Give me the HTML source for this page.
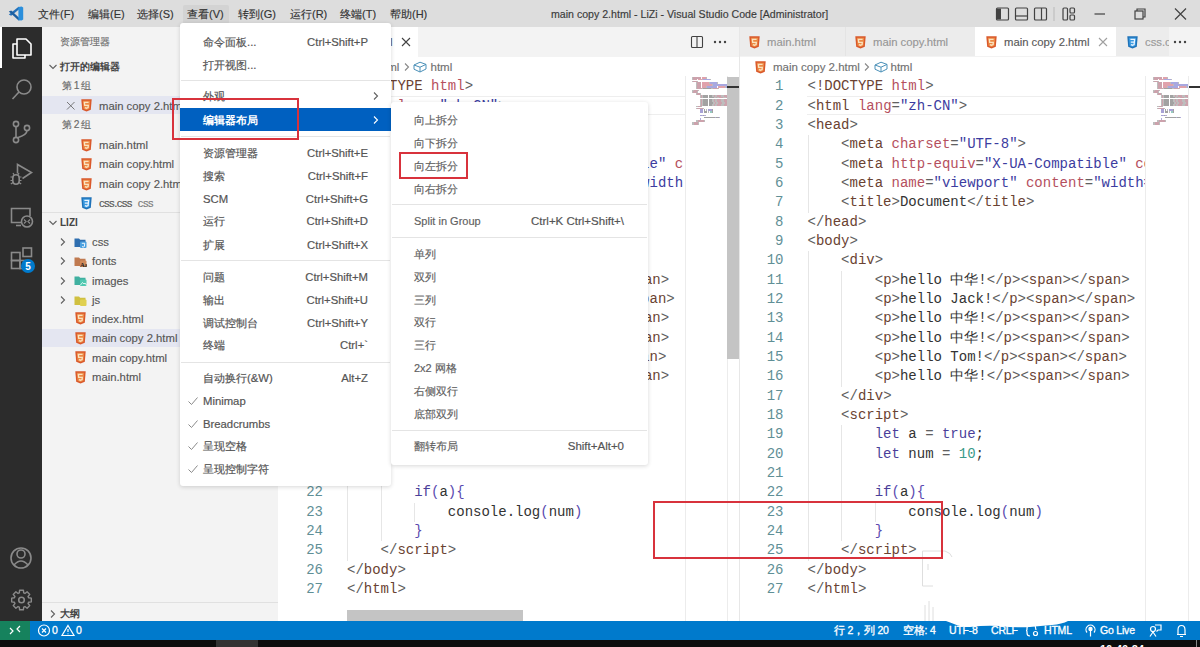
<!DOCTYPE html>
<html><head><meta charset="utf-8"><style>
*{margin:0;padding:0;box-sizing:border-box}
html,body{width:1200px;height:647px;overflow:hidden;background:#fff;font-family:"Liberation Sans",sans-serif}
.abs{position:absolute}
#titlebar{position:absolute;left:0;top:0;width:1200px;height:27px;background:#dddddd}
.mb{position:absolute;top:6px;font-size:11px;color:#333;-webkit-text-stroke:0.15px #333;line-height:16px;white-space:nowrap}
#act{position:absolute;left:0;top:27px;width:42px;height:594px;background:#2c2c2c}
#side{position:absolute;left:42px;top:27px;width:236px;height:594px;background:#f3f3f3}
.st{position:absolute;font-size:11.3px;color:#565656;-webkit-text-stroke:0.15px currentColor;line-height:16px;white-space:nowrap}
.ed{position:absolute;top:27px;height:594px;background:#fff;overflow:hidden}
.tabs{position:absolute;left:0;top:0;height:29px;background:#f3f3f3;width:100%}
.ln{position:absolute;width:40px;text-align:right;font-family:"Liberation Mono",monospace;font-size:14px;line-height:19.33px;color:#5f8f96}
.cl{position:absolute;font-family:"Liberation Mono",monospace;font-size:14px;line-height:19.33px;color:#333;white-space:pre}
.p{color:#606060}.t{color:#6a4232}.a{color:#b5505e}.s{color:#3c3ca0}.x{color:#333}.k{color:#4b3f9a}.n{color:#3a9a8a}.b{color:#5a4ab0}
.menu{position:absolute;background:#fff;box-shadow:0 1px 4px rgba(0,0,0,0.16);border-radius:3px}
.mi{position:absolute;font-size:11.3px;color:#555;-webkit-text-stroke:0.2px #555;line-height:16px;white-space:nowrap}
.sep{position:absolute;height:1px;background:#e4e4e4}
.red{position:absolute;border:2.5px solid #d8323c}
#status{position:absolute;left:0;top:621px;width:1200px;height:19px;background:#007acc}
#task{position:absolute;left:0;top:640px;width:1200px;height:7px;background:#0d0d0d}
.sb{position:absolute;top:623px;font-size:10.5px;color:#fff;line-height:15px;white-space:nowrap;overflow:visible;-webkit-text-stroke:0.3px #fff;letter-spacing:-0.2px}
</style></head>
<body>
<div id="titlebar"></div>
<svg class="abs" style="left:0;top:0" width="30" height="27" viewBox="0 0 30 27"><path d="M18.6 6.8 L21 7.8 L11.2 15.8 L8.8 14.6 Z" fill="#2470b8"/><path d="M8.8 11.6 L11.2 10.4 L21 19.4 L18.6 20.6 Z" fill="#1d5fa0"/><path d="M18.4 7 L21.6 6.6 L23.2 7.6 V19.6 L21.6 20.6 L18.4 20.2 Z" fill="#2b8fdc"/></svg>
<div class="abs" style="left:183px;top:5px;width:46px;height:19px;background:#d3d3d3;border-radius:2px"></div>
<div class="mb" style="left:38px">文件(F)</div>
<div class="mb" style="left:88px">编辑(E)</div>
<div class="mb" style="left:137px">选择(S)</div>
<div class="mb" style="left:187px">查看(V)</div>
<div class="mb" style="left:238px">转到(G)</div>
<div class="mb" style="left:290px">运行(R)</div>
<div class="mb" style="left:340px">终端(T)</div>
<div class="mb" style="left:390px">帮助(H)</div>
<div class="mb" style="left:551px;color:#3c3c3c;font-size:10.6px">main copy 2.html - LiZi - Visual Studio Code [Administrator]</div>
<svg class="abs" style="left:990px;top:0" width="210" height="27" viewBox="0 0 210 27">
<g fill="none" stroke="#424242" stroke-width="1.2">
<rect x="6.5" y="8" width="12" height="12" rx="1"/>
<rect x="25.5" y="8" width="12" height="12" rx="1"/><line x1="25.5" y1="16" x2="37.5" y2="16"/>
<rect x="44.5" y="8" width="12" height="12" rx="1"/><line x1="51.5" y1="8" x2="51.5" y2="20"/>
<line x1="64" y1="7" x2="64" y2="21" stroke="#c0c0c0"/>
<rect x="73" y="8" width="4.5" height="12" rx="1"/><rect x="80" y="8" width="4.5" height="5" rx="1"/><rect x="80" y="15" width="4.5" height="5" rx="1"/>
<line x1="104.5" y1="14" x2="115" y2="14"/>
<rect x="145" y="11" width="8" height="8"/><path d="M147 11 V9 H155 V17 H153"/>
<path d="M185 8.5 L196 19.5 M196 8.5 L185 19.5"/>
</g>
<rect x="7" y="8.6" width="4" height="10.8" fill="#424242"/>
</svg>
<div id="act"></div>
<div class="abs" style="left:0;top:27px;width:2px;height:41px;background:#fff"></div>
<svg class="abs" style="left:0;top:27px" width="42" height="594" viewBox="0 0 42 594">
<g fill="none" stroke="#fff" stroke-width="1.6" stroke-linejoin="round">
<path d="M17 12 H26 L31 17 V28 H17 Z"/><path d="M17 17 H13 V31 H25 V28"/>
</g>
<g fill="none" stroke="#8a8a8a" stroke-width="1.6">
<circle cx="24" cy="60" r="7"/><line x1="19" y1="65" x2="12.5" y2="72"/>
<circle cx="16" cy="97" r="2.6"/><circle cx="16" cy="113" r="2.6"/><circle cx="27" cy="101" r="2.6"/>
<path d="M16 99.6 V110.4 M27 103.6 Q27 108 17.5 110.8"/>
<path d="M17.5 146.5 V137.5 L31.5 145.5 L22.5 151.5"/>
<path d="M12.8 151 Q12.8 147.8 16 147.8 Q19.2 147.8 19.2 151 V154 Q19.2 157.2 16 157.2 Q12.8 157.2 12.8 154 Z"/><path d="M10.5 150 H12.8 M10.5 153.5 H12.8 M10.8 157 L13 155.5 M21.5 150 H19.2 M21.5 153.5 H19.2 M21.2 157 L19 155.5 M14 147.8 L13 146 M18 147.8 L19 146" stroke-width="1.2"/>
<path d="M21 195.5 H11.5 V181.5 H30 V189"/><path d="M16 198.5 H21"/>
<circle cx="27" cy="194.5" r="5.5" fill="#2c2c2c"/><path d="M24 192.5 L26 194.5 L24 196.5 M30 192.5 L28 194.5 L30 196.5" stroke-width="1.2"/>
<rect x="11.5" y="225.5" width="8.5" height="8"/><rect x="11.5" y="233.5" width="8.5" height="8"/><rect x="20" y="233.5" width="7" height="8"/><rect x="23" y="221" width="8.5" height="8.5"/>
<circle cx="21" cy="531" r="10"/><circle cx="21" cy="527" r="4"/><path d="M14 538 Q21 530 28 538"/>
<circle cx="21.5" cy="573" r="2.8"/>
<path d="M28.57 570.81 L31.32 571.11 L31.32 574.89 L28.57 575.19 L28.05 576.45 L29.78 578.61 L27.11 581.28 L24.95 579.55 L23.69 580.07 L23.39 582.82 L19.61 582.82 L19.31 580.07 L18.05 579.55 L15.89 581.28 L13.22 578.61 L14.95 576.45 L14.43 575.19 L11.68 574.89 L11.68 571.11 L14.43 570.81 L14.95 569.55 L13.22 567.39 L15.89 564.72 L18.05 566.45 L19.31 565.93 L19.61 563.18 L23.39 563.18 L23.69 565.93 L24.95 566.45 L27.11 564.72 L29.78 567.39 L28.05 569.55 Z" stroke-width="1.4" stroke-linejoin="round"/>
</g>
<circle cx="28" cy="239" r="7" fill="#007acc"/>
<text x="28" y="243" font-size="10" font-family="Liberation Sans" fill="#fff" text-anchor="middle" font-weight="bold">5</text>
</svg>
<div id="side"></div>
<div class="st" style="left:60px;top:34.0px;font-size:10px;color:#6f6f6f">资源管理器</div>
<svg class="abs" style="left:48px;top:62px" width="10" height="10" viewBox="0 0 10 10"><path d="M1.5 3 L5 6.5 L8.5 3" fill="none" stroke="#616161" stroke-width="1.1"/></svg>
<div class="st" style="left:60px;top:59.0px;font-size:10px;font-weight:bold;color:#444;-webkit-text-stroke:0">打开的编辑器</div>
<div class="st" style="left:62px;top:78.0px;font-size:10.3px;color:#6a6a6a;word-spacing:-1.2px">第 1 组</div>
<div class="abs" style="left:42px;top:96px;width:236px;height:18px;background:#e4e6f1"></div>
<svg class="abs" style="left:66px;top:101px" width="10" height="10" viewBox="0 0 10 10"><path d="M1 1 L8.5 8.5 M8.5 1 L1 8.5" stroke="#6a6a6a" stroke-width="0.9"/></svg>
<svg class="abs" style="left:81px;top:99px" width="11" height="13" viewBox="0 0 11 13"><path d="M0.3 0.3 H10.7 L9.8 10.8 L5.5 12.6 L1.2 10.8 Z" fill="#d9582b"/><path d="M1.8 1.8 H9.2 L8.5 9.8 L5.5 11 L2.5 9.8 Z" fill="#ec8a45"/><path d="M7.6 3.4 H3.4 L3.7 6.4 H7.3 L7.1 8.6 L5.5 9.2 L3.9 8.6" fill="none" stroke="#fbe3c0" stroke-width="1.3"/></svg>
<div class="st" style="left:99px;top:98.0px;">main copy 2.html</div>
<div class="st" style="left:62px;top:117.0px;font-size:10.3px;color:#6a6a6a;word-spacing:-1.2px">第 2 组</div>
<svg class="abs" style="left:81px;top:138.5px" width="11" height="13" viewBox="0 0 11 13"><path d="M0.3 0.3 H10.7 L9.8 10.8 L5.5 12.6 L1.2 10.8 Z" fill="#d9582b"/><path d="M1.8 1.8 H9.2 L8.5 9.8 L5.5 11 L2.5 9.8 Z" fill="#ec8a45"/><path d="M7.6 3.4 H3.4 L3.7 6.4 H7.3 L7.1 8.6 L5.5 9.2 L3.9 8.6" fill="none" stroke="#fbe3c0" stroke-width="1.3"/></svg>
<div class="st" style="left:99px;top:137.0px;">main.html</div>
<svg class="abs" style="left:81px;top:157.5px" width="11" height="13" viewBox="0 0 11 13"><path d="M0.3 0.3 H10.7 L9.8 10.8 L5.5 12.6 L1.2 10.8 Z" fill="#d9582b"/><path d="M1.8 1.8 H9.2 L8.5 9.8 L5.5 11 L2.5 9.8 Z" fill="#ec8a45"/><path d="M7.6 3.4 H3.4 L3.7 6.4 H7.3 L7.1 8.6 L5.5 9.2 L3.9 8.6" fill="none" stroke="#fbe3c0" stroke-width="1.3"/></svg>
<div class="st" style="left:99px;top:156.0px;">main copy.html</div>
<svg class="abs" style="left:81px;top:177.5px" width="11" height="13" viewBox="0 0 11 13"><path d="M0.3 0.3 H10.7 L9.8 10.8 L5.5 12.6 L1.2 10.8 Z" fill="#d9582b"/><path d="M1.8 1.8 H9.2 L8.5 9.8 L5.5 11 L2.5 9.8 Z" fill="#ec8a45"/><path d="M7.6 3.4 H3.4 L3.7 6.4 H7.3 L7.1 8.6 L5.5 9.2 L3.9 8.6" fill="none" stroke="#fbe3c0" stroke-width="1.3"/></svg>
<div class="st" style="left:99px;top:176.0px;">main copy 2.html</div>
<svg class="abs" style="left:81px;top:197px" width="11" height="13" viewBox="0 0 11 13"><path d="M0.3 0.3 H10.7 L9.8 10.8 L5.5 12.6 L1.2 10.8 Z" fill="#1f72b8"/><path d="M1.8 1.8 H9.2 L8.5 9.8 L5.5 11 L2.5 9.8 Z" fill="#3a9ae0"/><path d="M3.4 3.4 H7.6 L7.1 8.6 L5.5 9.2 L3.9 8.6 M3.8 6.2 H7.3" fill="none" stroke="#eaf4ff" stroke-width="1.3"/></svg>
<div class="st" style="left:99px;top:195.0px;"><span style="letter-spacing:-0.6px">css.css</span><span style="font-size:11px;color:#7a7a7a;margin-left:6px;letter-spacing:-0.4px">css</span></div>
<div class="abs" style="left:42px;top:212px;width:236px;height:1px;background:#e0e0e0"></div>
<svg class="abs" style="left:48px;top:218px" width="10" height="10" viewBox="0 0 10 10"><path d="M1.5 3 L5 6.5 L8.5 3" fill="none" stroke="#616161" stroke-width="1.1"/></svg>
<div class="st" style="left:60px;top:215.0px;font-size:10px;font-weight:bold;color:#444;-webkit-text-stroke:0">LIZI</div>
<svg class="abs" style="left:58px;top:237px" width="10" height="10" viewBox="0 0 10 10"><path d="M3 1.5 L6.5 5 L3 8.5" fill="none" stroke="#616161" stroke-width="1.1"/></svg>
<svg class="abs" style="left:74px;top:236.5px" width="13" height="11" viewBox="0 0 13 11"><path d="M0.5 1.5 H5 L6.2 2.8 H11.5 V10 H0.5 Z" fill="#2f6fb0"/><rect x="6" y="4.5" width="6.5" height="6.5" rx="1" fill="#4aa0e0"/><path d="M7.8 6.3 H10.7 L10.4 9.5 L9.2 10 L8 9.5" fill="none" stroke="#fff" stroke-width="0.9"/></svg>
<div class="st" style="left:92px;top:234.0px;">css</div>
<svg class="abs" style="left:58px;top:256px" width="10" height="10" viewBox="0 0 10 10"><path d="M3 1.5 L6.5 5 L3 8.5" fill="none" stroke="#616161" stroke-width="1.1"/></svg>
<svg class="abs" style="left:74px;top:255.5px" width="13" height="11" viewBox="0 0 13 11"><path d="M0.5 1.5 H5 L6.2 2.8 H11.5 V10 H0.5 Z" fill="#c07a50"/><rect x="6" y="4.5" width="6.5" height="6.5" rx="1" fill="#d08a5a"/><text x="6" y="10.6" font-size="6.5" font-family="Liberation Serif" font-weight="bold" fill="#222">Aa</text></svg>
<div class="st" style="left:92px;top:253.0px;">fonts</div>
<svg class="abs" style="left:58px;top:275.5px" width="10" height="10" viewBox="0 0 10 10"><path d="M3 1.5 L6.5 5 L3 8.5" fill="none" stroke="#616161" stroke-width="1.1"/></svg>
<svg class="abs" style="left:74px;top:275.0px" width="13" height="11" viewBox="0 0 13 11"><path d="M0.5 1.5 H5 L6.2 2.8 H11.5 V10 H0.5 Z" fill="#40b0a0"/><rect x="6" y="4.5" width="6.5" height="6.5" rx="1" fill="#50c8b0"/><path d="M6.5 10 L8.5 7.5 L10 9 L11 8 L12.5 10" fill="none" stroke="#fff" stroke-width="0.8"/></svg>
<div class="st" style="left:92px;top:272.5px;">images</div>
<svg class="abs" style="left:58px;top:295px" width="10" height="10" viewBox="0 0 10 10"><path d="M3 1.5 L6.5 5 L3 8.5" fill="none" stroke="#616161" stroke-width="1.1"/></svg>
<svg class="abs" style="left:74px;top:294.5px" width="13" height="11" viewBox="0 0 13 11"><path d="M0.5 1.5 H5 L6.2 2.8 H11.5 V10 H0.5 Z" fill="#d0c040"/><rect x="6" y="4.5" width="6.5" height="6.5" rx="1" fill="#e0d050"/></svg>
<div class="st" style="left:92px;top:292.0px;">js</div>
<div class="abs" style="left:42px;top:329px;width:236px;height:18px;background:#e4e6f1"></div>
<svg class="abs" style="left:75px;top:312.0px" width="11" height="13" viewBox="0 0 11 13"><path d="M0.3 0.3 H10.7 L9.8 10.8 L5.5 12.6 L1.2 10.8 Z" fill="#d9582b"/><path d="M1.8 1.8 H9.2 L8.5 9.8 L5.5 11 L2.5 9.8 Z" fill="#ec8a45"/><path d="M7.6 3.4 H3.4 L3.7 6.4 H7.3 L7.1 8.6 L5.5 9.2 L3.9 8.6" fill="none" stroke="#fbe3c0" stroke-width="1.3"/></svg>
<div class="st" style="left:92px;top:310.5px;">index.html</div>
<svg class="abs" style="left:75px;top:331.5px" width="11" height="13" viewBox="0 0 11 13"><path d="M0.3 0.3 H10.7 L9.8 10.8 L5.5 12.6 L1.2 10.8 Z" fill="#d9582b"/><path d="M1.8 1.8 H9.2 L8.5 9.8 L5.5 11 L2.5 9.8 Z" fill="#ec8a45"/><path d="M7.6 3.4 H3.4 L3.7 6.4 H7.3 L7.1 8.6 L5.5 9.2 L3.9 8.6" fill="none" stroke="#fbe3c0" stroke-width="1.3"/></svg>
<div class="st" style="left:92px;top:330.0px;">main copy 2.html</div>
<svg class="abs" style="left:75px;top:351.0px" width="11" height="13" viewBox="0 0 11 13"><path d="M0.3 0.3 H10.7 L9.8 10.8 L5.5 12.6 L1.2 10.8 Z" fill="#d9582b"/><path d="M1.8 1.8 H9.2 L8.5 9.8 L5.5 11 L2.5 9.8 Z" fill="#ec8a45"/><path d="M7.6 3.4 H3.4 L3.7 6.4 H7.3 L7.1 8.6 L5.5 9.2 L3.9 8.6" fill="none" stroke="#fbe3c0" stroke-width="1.3"/></svg>
<div class="st" style="left:92px;top:349.5px;">main copy.html</div>
<svg class="abs" style="left:75px;top:370.5px" width="11" height="13" viewBox="0 0 11 13"><path d="M0.3 0.3 H10.7 L9.8 10.8 L5.5 12.6 L1.2 10.8 Z" fill="#d9582b"/><path d="M1.8 1.8 H9.2 L8.5 9.8 L5.5 11 L2.5 9.8 Z" fill="#ec8a45"/><path d="M7.6 3.4 H3.4 L3.7 6.4 H7.3 L7.1 8.6 L5.5 9.2 L3.9 8.6" fill="none" stroke="#fbe3c0" stroke-width="1.3"/></svg>
<div class="st" style="left:92px;top:369.0px;">main.html</div>
<div class="abs" style="left:42px;top:602px;width:236px;height:1px;background:#e0e0e0"></div>
<svg class="abs" style="left:48px;top:609px" width="10" height="10" viewBox="0 0 10 10"><path d="M3 1.5 L6.5 5 L3 8.5" fill="none" stroke="#616161" stroke-width="1.1"/></svg>
<div class="st" style="left:60px;top:606.0px;font-size:10px;font-weight:bold;color:#444;-webkit-text-stroke:0">大纲</div>
<div class="abs" style="left:278px;top:27px;width:922px;height:594px;background:#fff"></div>
<div class="abs" style="left:278px;top:27px;width:922px;height:30px;background:#f3f3f3"></div>
<div class="abs" style="left:278px;top:27px;width:140px;height:30px;background:#fff"></div>
<svg class="abs" style="left:401px;top:37px" width="10" height="10" viewBox="0 0 10 10"><path d="M1 1 L9 9 M9 1 L1 9" stroke="#424242" stroke-width="1.1"/></svg>
<svg class="abs" style="left:690px;top:35px" width="14" height="14" viewBox="0 0 14 14"><rect x="1.5" y="1.5" width="11" height="11" rx="1" fill="none" stroke="#424242" stroke-width="1.1"/><line x1="7" y1="1.5" x2="7" y2="12.5" stroke="#424242" stroke-width="1.1"/></svg>
<svg class="abs" style="left:713px;top:40px" width="14" height="4" viewBox="0 0 14 4"><circle cx="2" cy="2" r="1.2" fill="#424242"/><circle cx="7" cy="2" r="1.2" fill="#424242"/><circle cx="12" cy="2" r="1.2" fill="#424242"/></svg>
<svg class="abs" style="left:294px;top:61px" width="11" height="13" viewBox="0 0 11 13"><path d="M0.3 0.3 H10.7 L9.8 10.8 L5.5 12.6 L1.2 10.8 Z" fill="#d9582b"/><path d="M1.8 1.8 H9.2 L8.5 9.8 L5.5 11 L2.5 9.8 Z" fill="#ec8a45"/><path d="M7.6 3.4 H3.4 L3.7 6.4 H7.3 L7.1 8.6 L5.5 9.2 L3.9 8.6" fill="none" stroke="#fbe3c0" stroke-width="1.3"/></svg>
<div class="st" style="left:312.5px;top:59px;font-size:11.5px;color:#717171">main copy 2.html</div>
<svg class="abs" style="left:289px;top:36px" width="11" height="13" viewBox="0 0 11 13"><path d="M0.3 0.3 H10.7 L9.8 10.8 L5.5 12.6 L1.2 10.8 Z" fill="#d9582b"/><path d="M1.8 1.8 H9.2 L8.5 9.8 L5.5 11 L2.5 9.8 Z" fill="#ec8a45"/><path d="M7.6 3.4 H3.4 L3.7 6.4 H7.3 L7.1 8.6 L5.5 9.2 L3.9 8.6" fill="none" stroke="#fbe3c0" stroke-width="1.3"/></svg>
<div class="st" style="left:307px;top:34px;color:#5a5a5a">main copy 2.html</div>
<svg class="abs" style="left:402px;top:62px" width="10" height="10" viewBox="0 0 10 10"><path d="M3 1.5 L6.5 5 L3 8.5" fill="none" stroke="#888" stroke-width="1.1"/></svg>
<svg class="abs" style="left:413px;top:61px" width="14" height="12" viewBox="0 0 14 12"><path d="M1 4 L7 1.2 L13 3.4 L7 6.2 Z M1 4 V8.2 L7 11 L13 8 V3.4 M7 6.2 V11" fill="none" stroke="#4a90b8" stroke-width="1" stroke-linejoin="round"/></svg>
<div class="st" style="left:430.5px;top:59px;font-size:11.5px;color:#717171">html</div>
<div class="abs" style="left:740px;top:27px;width:106px;height:29px;background:#ececec;border-right:1px solid #e4e4e4"></div>
<div class="abs" style="left:846px;top:27px;width:129px;height:29px;background:#ececec"></div>
<div class="abs" style="left:975px;top:27px;width:141px;height:29px;background:#fff"></div>
<div class="abs" style="left:1116px;top:27px;width:84px;height:29px;background:#ececec"></div>
<svg class="abs" style="left:749px;top:36px" width="11" height="13" viewBox="0 0 11 13"><path d="M0.3 0.3 H10.7 L9.8 10.8 L5.5 12.6 L1.2 10.8 Z" fill="#d9582b"/><path d="M1.8 1.8 H9.2 L8.5 9.8 L5.5 11 L2.5 9.8 Z" fill="#ec8a45"/><path d="M7.6 3.4 H3.4 L3.7 6.4 H7.3 L7.1 8.6 L5.5 9.2 L3.9 8.6" fill="none" stroke="#fbe3c0" stroke-width="1.3"/></svg>
<div class="st" style="left:767px;top:34px;color:#979797">main.html</div>
<svg class="abs" style="left:855px;top:36px" width="11" height="13" viewBox="0 0 11 13"><path d="M0.3 0.3 H10.7 L9.8 10.8 L5.5 12.6 L1.2 10.8 Z" fill="#d9582b"/><path d="M1.8 1.8 H9.2 L8.5 9.8 L5.5 11 L2.5 9.8 Z" fill="#ec8a45"/><path d="M7.6 3.4 H3.4 L3.7 6.4 H7.3 L7.1 8.6 L5.5 9.2 L3.9 8.6" fill="none" stroke="#fbe3c0" stroke-width="1.3"/></svg>
<div class="st" style="left:873px;top:34px;color:#979797">main copy.html</div>
<svg class="abs" style="left:986px;top:36px" width="11" height="13" viewBox="0 0 11 13"><path d="M0.3 0.3 H10.7 L9.8 10.8 L5.5 12.6 L1.2 10.8 Z" fill="#d9582b"/><path d="M1.8 1.8 H9.2 L8.5 9.8 L5.5 11 L2.5 9.8 Z" fill="#ec8a45"/><path d="M7.6 3.4 H3.4 L3.7 6.4 H7.3 L7.1 8.6 L5.5 9.2 L3.9 8.6" fill="none" stroke="#fbe3c0" stroke-width="1.3"/></svg>
<div class="st" style="left:1004px;top:34px;color:#5a5a5a">main copy 2.html</div>
<svg class="abs" style="left:1098px;top:37px" width="10" height="10" viewBox="0 0 10 10"><path d="M1 1 L9 9 M9 1 L1 9" stroke="#a0a0a0" stroke-width="1.1"/></svg>
<svg class="abs" style="left:1127px;top:36px" width="11" height="13" viewBox="0 0 11 13"><path d="M0.3 0.3 H10.7 L9.8 10.8 L5.5 12.6 L1.2 10.8 Z" fill="#1f72b8"/><path d="M1.8 1.8 H9.2 L8.5 9.8 L5.5 11 L2.5 9.8 Z" fill="#3a9ae0"/><path d="M3.4 3.4 H7.6 L7.1 8.6 L5.5 9.2 L3.9 8.6 M3.8 6.2 H7.3" fill="none" stroke="#eaf4ff" stroke-width="1.3"/></svg>
<div class="abs" style="left:1145px;top:34px;width:24px;height:16px;overflow:hidden"><div class="st" style="left:0;top:0;color:#9a9a9a">css.css</div></div>
<div class="abs" style="left:1169px;top:27px;width:31px;height:29px;background:#f3f3f3"></div>
<svg class="abs" style="left:1173px;top:40px" width="14" height="4" viewBox="0 0 14 4"><circle cx="2" cy="2" r="1.2" fill="#424242"/><circle cx="7" cy="2" r="1.2" fill="#424242"/><circle cx="12" cy="2" r="1.2" fill="#424242"/></svg>
<svg class="abs" style="left:755px;top:61px" width="11" height="13" viewBox="0 0 11 13"><path d="M0.3 0.3 H10.7 L9.8 10.8 L5.5 12.6 L1.2 10.8 Z" fill="#d9582b"/><path d="M1.8 1.8 H9.2 L8.5 9.8 L5.5 11 L2.5 9.8 Z" fill="#ec8a45"/><path d="M7.6 3.4 H3.4 L3.7 6.4 H7.3 L7.1 8.6 L5.5 9.2 L3.9 8.6" fill="none" stroke="#fbe3c0" stroke-width="1.3"/></svg>
<div class="st" style="left:773px;top:59px;font-size:11.5px;color:#717171">main copy 2.html</div>
<svg class="abs" style="left:862px;top:62px" width="10" height="10" viewBox="0 0 10 10"><path d="M3 1.5 L6.5 5 L3 8.5" fill="none" stroke="#888" stroke-width="1.1"/></svg>
<svg class="abs" style="left:874px;top:61px" width="14" height="12" viewBox="0 0 14 12"><path d="M1 4 L7 1.2 L13 3.4 L7 6.2 Z M1 4 V8.2 L7 11 L13 8 V3.4 M7 6.2 V11" fill="none" stroke="#4a90b8" stroke-width="1" stroke-linejoin="round"/></svg>
<div class="st" style="left:890.5px;top:59px;font-size:11.5px;color:#717171">html</div>
<div class="abs" style="left:347px;top:96px;width:338px;height:19px;border-top:1px solid #eeeeee;border-bottom:1px solid #eeeeee"></div>
<div class="abs" style="left:807px;top:96px;width:338px;height:19px;border-top:1px solid #eeeeee;border-bottom:1px solid #eeeeee"></div>
<div class="abs" style="left:347.0px;top:135.3px;width:1px;height:77.3px;background:#e6e6e6"></div>
<div class="abs" style="left:347.0px;top:251.3px;width:1px;height:309.3px;background:#e6e6e6"></div>
<div class="abs" style="left:380.6px;top:270.6px;width:1px;height:116.0px;background:#e6e6e6"></div>
<div class="abs" style="left:380.6px;top:425.2px;width:1px;height:116.0px;background:#e6e6e6"></div>
<div class="abs" style="left:414.2px;top:502.6px;width:1px;height:19.3px;background:#e6e6e6"></div>
<div class="abs" style="left:807.5px;top:135.3px;width:1px;height:77.3px;background:#e6e6e6"></div>
<div class="abs" style="left:807.5px;top:251.3px;width:1px;height:309.3px;background:#e6e6e6"></div>
<div class="abs" style="left:841.1px;top:270.6px;width:1px;height:116.0px;background:#e6e6e6"></div>
<div class="abs" style="left:841.1px;top:425.2px;width:1px;height:116.0px;background:#e6e6e6"></div>
<div class="abs" style="left:874.7px;top:502.6px;width:1px;height:19.3px;background:#e6e6e6"></div>
<div class="abs" style="left:0;top:0;width:1200px;height:647px;overflow:hidden;clip-path:inset(76px 517px 26px 278px)">
<div class="ln" style="top:77.3px;left:283px">1</div>
<div class="cl" style="top:77.3px;left:347px"><span class="p">&lt;</span><span class="t">!DOCTYPE</span> <span class="a">html</span><span class="p">&gt;</span></div>
<div class="ln" style="top:96.6px;left:283px">2</div>
<div class="cl" style="top:96.6px;left:347px"><span class="p">&lt;</span><span class="t">html</span> <span class="a">lang</span><span class="p">=</span><span class="s">&quot;zh-CN&quot;</span><span class="p">&gt;</span></div>
<div class="ln" style="top:116.0px;left:283px">3</div>
<div class="cl" style="top:116.0px;left:347px"><span class="p">&lt;</span><span class="t">head</span><span class="p">&gt;</span></div>
<div class="ln" style="top:135.3px;left:283px">4</div>
<div class="cl" style="top:135.3px;left:347px">    <span class="p">&lt;</span><span class="t">meta</span> <span class="a">charset</span><span class="p">=</span><span class="s">&quot;UTF-8&quot;</span><span class="p">&gt;</span></div>
<div class="ln" style="top:154.6px;left:283px">5</div>
<div class="cl" style="top:154.6px;left:347px">    <span class="p">&lt;</span><span class="t">meta</span> <span class="a">http-equiv</span><span class="p">=</span><span class="s">&quot;X-UA-Compatible&quot;</span> <span class="a">content</span><span class="p">=</span><span class="s">&quot;IE=edge&quot;</span><span class="p">&gt;</span></div>
<div class="ln" style="top:173.9px;left:283px">6</div>
<div class="cl" style="top:173.9px;left:347px">    <span class="p">&lt;</span><span class="t">meta</span> <span class="a">name</span><span class="p">=</span><span class="s">&quot;viewport&quot;</span> <span class="a">content</span><span class="p">=</span><span class="s">&quot;width=device-width, initial-scale=1.0&quot;</span><span class="p">&gt;</span></div>
<div class="ln" style="top:193.3px;left:283px">7</div>
<div class="cl" style="top:193.3px;left:347px">    <span class="p">&lt;</span><span class="t">title</span><span class="p">&gt;</span><span class="x">Document</span><span class="p">&lt;/</span><span class="t">title</span><span class="p">&gt;</span></div>
<div class="ln" style="top:212.6px;left:283px">8</div>
<div class="cl" style="top:212.6px;left:347px"><span class="p">&lt;/</span><span class="t">head</span><span class="p">&gt;</span></div>
<div class="ln" style="top:231.9px;left:283px">9</div>
<div class="cl" style="top:231.9px;left:347px"><span class="p">&lt;</span><span class="t">body</span><span class="p">&gt;</span></div>
<div class="ln" style="top:251.3px;left:283px">10</div>
<div class="cl" style="top:251.3px;left:347px">    <span class="p">&lt;</span><span class="t">div</span><span class="p">&gt;</span></div>
<div class="ln" style="top:270.6px;left:283px">11</div>
<div class="cl" style="top:270.6px;left:347px">        <span class="p">&lt;</span><span class="t">p</span><span class="p">&gt;</span><span class="x">hello 中华!</span><span class="p">&lt;/</span><span class="t">p</span><span class="p">&gt;</span><span class="p">&lt;</span><span class="t">span</span><span class="p">&gt;</span><span class="p">&lt;/</span><span class="t">span</span><span class="p">&gt;</span></div>
<div class="ln" style="top:289.9px;left:283px">12</div>
<div class="cl" style="top:289.9px;left:347px">        <span class="p">&lt;</span><span class="t">p</span><span class="p">&gt;</span><span class="x">hello Jack!</span><span class="p">&lt;/</span><span class="t">p</span><span class="p">&gt;</span><span class="p">&lt;</span><span class="t">span</span><span class="p">&gt;</span><span class="p">&lt;/</span><span class="t">span</span><span class="p">&gt;</span></div>
<div class="ln" style="top:309.3px;left:283px">13</div>
<div class="cl" style="top:309.3px;left:347px">        <span class="p">&lt;</span><span class="t">p</span><span class="p">&gt;</span><span class="x">hello 中华!</span><span class="p">&lt;/</span><span class="t">p</span><span class="p">&gt;</span><span class="p">&lt;</span><span class="t">span</span><span class="p">&gt;</span><span class="p">&lt;/</span><span class="t">span</span><span class="p">&gt;</span></div>
<div class="ln" style="top:328.6px;left:283px">14</div>
<div class="cl" style="top:328.6px;left:347px">        <span class="p">&lt;</span><span class="t">p</span><span class="p">&gt;</span><span class="x">hello 中华!</span><span class="p">&lt;/</span><span class="t">p</span><span class="p">&gt;</span><span class="p">&lt;</span><span class="t">span</span><span class="p">&gt;</span><span class="p">&lt;/</span><span class="t">span</span><span class="p">&gt;</span></div>
<div class="ln" style="top:347.9px;left:283px">15</div>
<div class="cl" style="top:347.9px;left:347px">        <span class="p">&lt;</span><span class="t">p</span><span class="p">&gt;</span><span class="x">hello Tom!</span><span class="p">&lt;/</span><span class="t">p</span><span class="p">&gt;</span><span class="p">&lt;</span><span class="t">span</span><span class="p">&gt;</span><span class="p">&lt;/</span><span class="t">span</span><span class="p">&gt;</span></div>
<div class="ln" style="top:367.2px;left:283px">16</div>
<div class="cl" style="top:367.2px;left:347px">        <span class="p">&lt;</span><span class="t">p</span><span class="p">&gt;</span><span class="x">hello 中华!</span><span class="p">&lt;/</span><span class="t">p</span><span class="p">&gt;</span><span class="p">&lt;</span><span class="t">span</span><span class="p">&gt;</span><span class="p">&lt;/</span><span class="t">span</span><span class="p">&gt;</span></div>
<div class="ln" style="top:386.6px;left:283px">17</div>
<div class="cl" style="top:386.6px;left:347px">    <span class="p">&lt;/</span><span class="t">div</span><span class="p">&gt;</span></div>
<div class="ln" style="top:405.9px;left:283px">18</div>
<div class="cl" style="top:405.9px;left:347px">    <span class="p">&lt;</span><span class="t">script</span><span class="p">&gt;</span></div>
<div class="ln" style="top:425.2px;left:283px">19</div>
<div class="cl" style="top:425.2px;left:347px">        <span class="k">let</span><span class="x"> a </span><span class="p">=</span> <span class="k">true</span><span class="x">;</span></div>
<div class="ln" style="top:444.6px;left:283px">20</div>
<div class="cl" style="top:444.6px;left:347px">        <span class="k">let</span><span class="x"> num </span><span class="p">=</span> <span class="n">10</span><span class="x">;</span></div>
<div class="ln" style="top:463.9px;left:283px">21</div>
<div class="cl" style="top:463.9px;left:347px"></div>
<div class="ln" style="top:483.2px;left:283px">22</div>
<div class="cl" style="top:483.2px;left:347px">        <span class="k">if</span><span class="b">(</span><span class="x">a</span><span class="b">)</span><span class="b">{</span></div>
<div class="ln" style="top:502.6px;left:283px">23</div>
<div class="cl" style="top:502.6px;left:347px">            <span class="x">console.log</span><span class="b">(</span><span class="x">num</span><span class="b">)</span></div>
<div class="ln" style="top:521.9px;left:283px">24</div>
<div class="cl" style="top:521.9px;left:347px">        <span class="b">}</span></div>
<div class="ln" style="top:541.2px;left:283px">25</div>
<div class="cl" style="top:541.2px;left:347px">    <span class="p">&lt;/</span><span class="t">script</span><span class="p">&gt;</span></div>
<div class="ln" style="top:560.5px;left:283px">26</div>
<div class="cl" style="top:560.5px;left:347px"><span class="p">&lt;/</span><span class="t">body</span><span class="p">&gt;</span></div>
<div class="ln" style="top:579.9px;left:283px">27</div>
<div class="cl" style="top:579.9px;left:347px"><span class="p">&lt;/</span><span class="t">html</span><span class="p">&gt;</span></div>
</div>
<div class="abs" style="left:0;top:0;width:1200px;height:647px;clip-path:inset(76px 55px 26px 740px)">
<div class="ln" style="top:77.3px;left:743.5px">1</div>
<div class="cl" style="top:77.3px;left:807.5px"><span class="p">&lt;</span><span class="t">!DOCTYPE</span> <span class="a">html</span><span class="p">&gt;</span></div>
<div class="ln" style="top:96.6px;left:743.5px">2</div>
<div class="cl" style="top:96.6px;left:807.5px"><span class="p">&lt;</span><span class="t">html</span> <span class="a">lang</span><span class="p">=</span><span class="s">&quot;zh-CN&quot;</span><span class="p">&gt;</span></div>
<div class="ln" style="top:116.0px;left:743.5px">3</div>
<div class="cl" style="top:116.0px;left:807.5px"><span class="p">&lt;</span><span class="t">head</span><span class="p">&gt;</span></div>
<div class="ln" style="top:135.3px;left:743.5px">4</div>
<div class="cl" style="top:135.3px;left:807.5px">    <span class="p">&lt;</span><span class="t">meta</span> <span class="a">charset</span><span class="p">=</span><span class="s">&quot;UTF-8&quot;</span><span class="p">&gt;</span></div>
<div class="ln" style="top:154.6px;left:743.5px">5</div>
<div class="cl" style="top:154.6px;left:807.5px">    <span class="p">&lt;</span><span class="t">meta</span> <span class="a">http-equiv</span><span class="p">=</span><span class="s">&quot;X-UA-Compatible&quot;</span> <span class="a">content</span><span class="p">=</span><span class="s">&quot;IE=edge&quot;</span><span class="p">&gt;</span></div>
<div class="ln" style="top:173.9px;left:743.5px">6</div>
<div class="cl" style="top:173.9px;left:807.5px">    <span class="p">&lt;</span><span class="t">meta</span> <span class="a">name</span><span class="p">=</span><span class="s">&quot;viewport&quot;</span> <span class="a">content</span><span class="p">=</span><span class="s">&quot;width=device-width, initial-scale=1.0&quot;</span><span class="p">&gt;</span></div>
<div class="ln" style="top:193.3px;left:743.5px">7</div>
<div class="cl" style="top:193.3px;left:807.5px">    <span class="p">&lt;</span><span class="t">title</span><span class="p">&gt;</span><span class="x">Document</span><span class="p">&lt;/</span><span class="t">title</span><span class="p">&gt;</span></div>
<div class="ln" style="top:212.6px;left:743.5px">8</div>
<div class="cl" style="top:212.6px;left:807.5px"><span class="p">&lt;/</span><span class="t">head</span><span class="p">&gt;</span></div>
<div class="ln" style="top:231.9px;left:743.5px">9</div>
<div class="cl" style="top:231.9px;left:807.5px"><span class="p">&lt;</span><span class="t">body</span><span class="p">&gt;</span></div>
<div class="ln" style="top:251.3px;left:743.5px">10</div>
<div class="cl" style="top:251.3px;left:807.5px">    <span class="p">&lt;</span><span class="t">div</span><span class="p">&gt;</span></div>
<div class="ln" style="top:270.6px;left:743.5px">11</div>
<div class="cl" style="top:270.6px;left:807.5px">        <span class="p">&lt;</span><span class="t">p</span><span class="p">&gt;</span><span class="x">hello 中华!</span><span class="p">&lt;/</span><span class="t">p</span><span class="p">&gt;</span><span class="p">&lt;</span><span class="t">span</span><span class="p">&gt;</span><span class="p">&lt;/</span><span class="t">span</span><span class="p">&gt;</span></div>
<div class="ln" style="top:289.9px;left:743.5px">12</div>
<div class="cl" style="top:289.9px;left:807.5px">        <span class="p">&lt;</span><span class="t">p</span><span class="p">&gt;</span><span class="x">hello Jack!</span><span class="p">&lt;/</span><span class="t">p</span><span class="p">&gt;</span><span class="p">&lt;</span><span class="t">span</span><span class="p">&gt;</span><span class="p">&lt;/</span><span class="t">span</span><span class="p">&gt;</span></div>
<div class="ln" style="top:309.3px;left:743.5px">13</div>
<div class="cl" style="top:309.3px;left:807.5px">        <span class="p">&lt;</span><span class="t">p</span><span class="p">&gt;</span><span class="x">hello 中华!</span><span class="p">&lt;/</span><span class="t">p</span><span class="p">&gt;</span><span class="p">&lt;</span><span class="t">span</span><span class="p">&gt;</span><span class="p">&lt;/</span><span class="t">span</span><span class="p">&gt;</span></div>
<div class="ln" style="top:328.6px;left:743.5px">14</div>
<div class="cl" style="top:328.6px;left:807.5px">        <span class="p">&lt;</span><span class="t">p</span><span class="p">&gt;</span><span class="x">hello 中华!</span><span class="p">&lt;/</span><span class="t">p</span><span class="p">&gt;</span><span class="p">&lt;</span><span class="t">span</span><span class="p">&gt;</span><span class="p">&lt;/</span><span class="t">span</span><span class="p">&gt;</span></div>
<div class="ln" style="top:347.9px;left:743.5px">15</div>
<div class="cl" style="top:347.9px;left:807.5px">        <span class="p">&lt;</span><span class="t">p</span><span class="p">&gt;</span><span class="x">hello Tom!</span><span class="p">&lt;/</span><span class="t">p</span><span class="p">&gt;</span><span class="p">&lt;</span><span class="t">span</span><span class="p">&gt;</span><span class="p">&lt;/</span><span class="t">span</span><span class="p">&gt;</span></div>
<div class="ln" style="top:367.2px;left:743.5px">16</div>
<div class="cl" style="top:367.2px;left:807.5px">        <span class="p">&lt;</span><span class="t">p</span><span class="p">&gt;</span><span class="x">hello 中华!</span><span class="p">&lt;/</span><span class="t">p</span><span class="p">&gt;</span><span class="p">&lt;</span><span class="t">span</span><span class="p">&gt;</span><span class="p">&lt;/</span><span class="t">span</span><span class="p">&gt;</span></div>
<div class="ln" style="top:386.6px;left:743.5px">17</div>
<div class="cl" style="top:386.6px;left:807.5px">    <span class="p">&lt;/</span><span class="t">div</span><span class="p">&gt;</span></div>
<div class="ln" style="top:405.9px;left:743.5px">18</div>
<div class="cl" style="top:405.9px;left:807.5px">    <span class="p">&lt;</span><span class="t">script</span><span class="p">&gt;</span></div>
<div class="ln" style="top:425.2px;left:743.5px">19</div>
<div class="cl" style="top:425.2px;left:807.5px">        <span class="k">let</span><span class="x"> a </span><span class="p">=</span> <span class="k">true</span><span class="x">;</span></div>
<div class="ln" style="top:444.6px;left:743.5px">20</div>
<div class="cl" style="top:444.6px;left:807.5px">        <span class="k">let</span><span class="x"> num </span><span class="p">=</span> <span class="n">10</span><span class="x">;</span></div>
<div class="ln" style="top:463.9px;left:743.5px">21</div>
<div class="cl" style="top:463.9px;left:807.5px"></div>
<div class="ln" style="top:483.2px;left:743.5px">22</div>
<div class="cl" style="top:483.2px;left:807.5px">        <span class="k">if</span><span class="b">(</span><span class="x">a</span><span class="b">)</span><span class="b">{</span></div>
<div class="ln" style="top:502.6px;left:743.5px">23</div>
<div class="cl" style="top:502.6px;left:807.5px">            <span class="x">console.log</span><span class="b">(</span><span class="x">num</span><span class="b">)</span></div>
<div class="ln" style="top:521.9px;left:743.5px">24</div>
<div class="cl" style="top:521.9px;left:807.5px">        <span class="b">}</span></div>
<div class="ln" style="top:541.2px;left:743.5px">25</div>
<div class="cl" style="top:541.2px;left:807.5px">    <span class="p">&lt;/</span><span class="t">script</span><span class="p">&gt;</span></div>
<div class="ln" style="top:560.5px;left:743.5px">26</div>
<div class="cl" style="top:560.5px;left:807.5px"><span class="p">&lt;/</span><span class="t">body</span><span class="p">&gt;</span></div>
<div class="ln" style="top:579.9px;left:743.5px">27</div>
<div class="cl" style="top:579.9px;left:807.5px"><span class="p">&lt;/</span><span class="t">html</span><span class="p">&gt;</span></div>
</div>
<div class="abs" style="left:685px;top:76px;width:1px;height:545px;background:#ececec"></div>
<div class="abs" style="left:692px;top:77.00px;width:1px;height:1.6px;background:#9a9a9a;opacity:0.65"></div>
<div class="abs" style="left:693px;top:77.00px;width:8px;height:1.6px;background:#b07080;opacity:0.65"></div>
<div class="abs" style="left:702px;top:77.00px;width:4px;height:1.6px;background:#d07080;opacity:0.65"></div>
<div class="abs" style="left:706px;top:77.00px;width:1px;height:1.6px;background:#9a9a9a;opacity:0.65"></div>
<div class="abs" style="left:692px;top:78.80px;width:1px;height:1.6px;background:#9a9a9a;opacity:0.65"></div>
<div class="abs" style="left:693px;top:78.80px;width:4px;height:1.6px;background:#b07080;opacity:0.65"></div>
<div class="abs" style="left:698px;top:78.80px;width:4px;height:1.6px;background:#d07080;opacity:0.65"></div>
<div class="abs" style="left:702px;top:78.80px;width:1px;height:1.6px;background:#9a9a9a;opacity:0.65"></div>
<div class="abs" style="left:703px;top:78.80px;width:7px;height:1.6px;background:#7a7ad0;opacity:0.65"></div>
<div class="abs" style="left:710px;top:78.80px;width:1px;height:1.6px;background:#9a9a9a;opacity:0.65"></div>
<div class="abs" style="left:692px;top:80.60px;width:1px;height:1.6px;background:#9a9a9a;opacity:0.65"></div>
<div class="abs" style="left:693px;top:80.60px;width:4px;height:1.6px;background:#b07080;opacity:0.65"></div>
<div class="abs" style="left:697px;top:80.60px;width:1px;height:1.6px;background:#9a9a9a;opacity:0.65"></div>
<div class="abs" style="left:696px;top:82.40px;width:1px;height:1.6px;background:#9a9a9a;opacity:0.65"></div>
<div class="abs" style="left:697px;top:82.40px;width:4px;height:1.6px;background:#b07080;opacity:0.65"></div>
<div class="abs" style="left:702px;top:82.40px;width:7px;height:1.6px;background:#d07080;opacity:0.65"></div>
<div class="abs" style="left:709px;top:82.40px;width:1px;height:1.6px;background:#9a9a9a;opacity:0.65"></div>
<div class="abs" style="left:710px;top:82.40px;width:7px;height:1.6px;background:#7a7ad0;opacity:0.65"></div>
<div class="abs" style="left:717px;top:82.40px;width:1px;height:1.6px;background:#9a9a9a;opacity:0.65"></div>
<div class="abs" style="left:696px;top:84.20px;width:1px;height:1.6px;background:#9a9a9a;opacity:0.65"></div>
<div class="abs" style="left:697px;top:84.20px;width:4px;height:1.6px;background:#b07080;opacity:0.65"></div>
<div class="abs" style="left:702px;top:84.20px;width:10px;height:1.6px;background:#d07080;opacity:0.65"></div>
<div class="abs" style="left:712px;top:84.20px;width:1px;height:1.6px;background:#9a9a9a;opacity:0.65"></div>
<div class="abs" style="left:713px;top:84.20px;width:14px;height:1.6px;background:#7a7ad0;opacity:0.65"></div>
<div class="abs" style="left:696px;top:86.00px;width:1px;height:1.6px;background:#9a9a9a;opacity:0.65"></div>
<div class="abs" style="left:697px;top:86.00px;width:4px;height:1.6px;background:#b07080;opacity:0.65"></div>
<div class="abs" style="left:702px;top:86.00px;width:4px;height:1.6px;background:#d07080;opacity:0.65"></div>
<div class="abs" style="left:706px;top:86.00px;width:1px;height:1.6px;background:#9a9a9a;opacity:0.65"></div>
<div class="abs" style="left:707px;top:86.00px;width:10px;height:1.6px;background:#7a7ad0;opacity:0.65"></div>
<div class="abs" style="left:718px;top:86.00px;width:7px;height:1.6px;background:#d07080;opacity:0.65"></div>
<div class="abs" style="left:725px;top:86.00px;width:1px;height:1.6px;background:#9a9a9a;opacity:0.65"></div>
<div class="abs" style="left:726px;top:86.00px;width:1px;height:1.6px;background:#7a7ad0;opacity:0.65"></div>
<div class="abs" style="left:696px;top:87.80px;width:1px;height:1.6px;background:#9a9a9a;opacity:0.65"></div>
<div class="abs" style="left:697px;top:87.80px;width:5px;height:1.6px;background:#b07080;opacity:0.65"></div>
<div class="abs" style="left:702px;top:87.80px;width:1px;height:1.6px;background:#9a9a9a;opacity:0.65"></div>
<div class="abs" style="left:703px;top:87.80px;width:8px;height:1.6px;background:#707070;opacity:0.65"></div>
<div class="abs" style="left:711px;top:87.80px;width:2px;height:1.6px;background:#9a9a9a;opacity:0.65"></div>
<div class="abs" style="left:713px;top:87.80px;width:5px;height:1.6px;background:#b07080;opacity:0.65"></div>
<div class="abs" style="left:718px;top:87.80px;width:1px;height:1.6px;background:#9a9a9a;opacity:0.65"></div>
<div class="abs" style="left:692px;top:89.60px;width:2px;height:1.6px;background:#9a9a9a;opacity:0.65"></div>
<div class="abs" style="left:694px;top:89.60px;width:4px;height:1.6px;background:#b07080;opacity:0.65"></div>
<div class="abs" style="left:698px;top:89.60px;width:1px;height:1.6px;background:#9a9a9a;opacity:0.65"></div>
<div class="abs" style="left:692px;top:91.40px;width:1px;height:1.6px;background:#9a9a9a;opacity:0.65"></div>
<div class="abs" style="left:693px;top:91.40px;width:4px;height:1.6px;background:#b07080;opacity:0.65"></div>
<div class="abs" style="left:697px;top:91.40px;width:1px;height:1.6px;background:#9a9a9a;opacity:0.65"></div>
<div class="abs" style="left:696px;top:93.20px;width:1px;height:1.6px;background:#9a9a9a;opacity:0.65"></div>
<div class="abs" style="left:697px;top:93.20px;width:3px;height:1.6px;background:#b07080;opacity:0.65"></div>
<div class="abs" style="left:700px;top:93.20px;width:1px;height:1.6px;background:#9a9a9a;opacity:0.65"></div>
<div class="abs" style="left:700px;top:95.00px;width:1px;height:1.6px;background:#9a9a9a;opacity:0.65"></div>
<div class="abs" style="left:701px;top:95.00px;width:1px;height:1.6px;background:#b07080;opacity:0.65"></div>
<div class="abs" style="left:702px;top:95.00px;width:1px;height:1.6px;background:#9a9a9a;opacity:0.65"></div>
<div class="abs" style="left:703px;top:95.00px;width:5px;height:1.6px;background:#707070;opacity:0.65"></div>
<div class="abs" style="left:709px;top:95.00px;width:3px;height:1.6px;background:#707070;opacity:0.65"></div>
<div class="abs" style="left:712px;top:95.00px;width:2px;height:1.6px;background:#9a9a9a;opacity:0.65"></div>
<div class="abs" style="left:714px;top:95.00px;width:1px;height:1.6px;background:#b07080;opacity:0.65"></div>
<div class="abs" style="left:715px;top:95.00px;width:1px;height:1.6px;background:#9a9a9a;opacity:0.65"></div>
<div class="abs" style="left:716px;top:95.00px;width:1px;height:1.6px;background:#9a9a9a;opacity:0.65"></div>
<div class="abs" style="left:717px;top:95.00px;width:4px;height:1.6px;background:#b07080;opacity:0.65"></div>
<div class="abs" style="left:721px;top:95.00px;width:1px;height:1.6px;background:#9a9a9a;opacity:0.65"></div>
<div class="abs" style="left:722px;top:95.00px;width:2px;height:1.6px;background:#9a9a9a;opacity:0.65"></div>
<div class="abs" style="left:724px;top:95.00px;width:3px;height:1.6px;background:#b07080;opacity:0.65"></div>
<div class="abs" style="left:700px;top:96.80px;width:1px;height:1.6px;background:#9a9a9a;opacity:0.65"></div>
<div class="abs" style="left:701px;top:96.80px;width:1px;height:1.6px;background:#b07080;opacity:0.65"></div>
<div class="abs" style="left:702px;top:96.80px;width:1px;height:1.6px;background:#9a9a9a;opacity:0.65"></div>
<div class="abs" style="left:703px;top:96.80px;width:5px;height:1.6px;background:#707070;opacity:0.65"></div>
<div class="abs" style="left:709px;top:96.80px;width:5px;height:1.6px;background:#707070;opacity:0.65"></div>
<div class="abs" style="left:714px;top:96.80px;width:2px;height:1.6px;background:#9a9a9a;opacity:0.65"></div>
<div class="abs" style="left:716px;top:96.80px;width:1px;height:1.6px;background:#b07080;opacity:0.65"></div>
<div class="abs" style="left:717px;top:96.80px;width:1px;height:1.6px;background:#9a9a9a;opacity:0.65"></div>
<div class="abs" style="left:718px;top:96.80px;width:1px;height:1.6px;background:#9a9a9a;opacity:0.65"></div>
<div class="abs" style="left:719px;top:96.80px;width:4px;height:1.6px;background:#b07080;opacity:0.65"></div>
<div class="abs" style="left:723px;top:96.80px;width:1px;height:1.6px;background:#9a9a9a;opacity:0.65"></div>
<div class="abs" style="left:724px;top:96.80px;width:2px;height:1.6px;background:#9a9a9a;opacity:0.65"></div>
<div class="abs" style="left:726px;top:96.80px;width:1px;height:1.6px;background:#b07080;opacity:0.65"></div>
<div class="abs" style="left:700px;top:98.60px;width:1px;height:1.6px;background:#9a9a9a;opacity:0.65"></div>
<div class="abs" style="left:701px;top:98.60px;width:1px;height:1.6px;background:#b07080;opacity:0.65"></div>
<div class="abs" style="left:702px;top:98.60px;width:1px;height:1.6px;background:#9a9a9a;opacity:0.65"></div>
<div class="abs" style="left:703px;top:98.60px;width:5px;height:1.6px;background:#707070;opacity:0.65"></div>
<div class="abs" style="left:709px;top:98.60px;width:3px;height:1.6px;background:#707070;opacity:0.65"></div>
<div class="abs" style="left:712px;top:98.60px;width:2px;height:1.6px;background:#9a9a9a;opacity:0.65"></div>
<div class="abs" style="left:714px;top:98.60px;width:1px;height:1.6px;background:#b07080;opacity:0.65"></div>
<div class="abs" style="left:715px;top:98.60px;width:1px;height:1.6px;background:#9a9a9a;opacity:0.65"></div>
<div class="abs" style="left:716px;top:98.60px;width:1px;height:1.6px;background:#9a9a9a;opacity:0.65"></div>
<div class="abs" style="left:717px;top:98.60px;width:4px;height:1.6px;background:#b07080;opacity:0.65"></div>
<div class="abs" style="left:721px;top:98.60px;width:1px;height:1.6px;background:#9a9a9a;opacity:0.65"></div>
<div class="abs" style="left:722px;top:98.60px;width:2px;height:1.6px;background:#9a9a9a;opacity:0.65"></div>
<div class="abs" style="left:724px;top:98.60px;width:3px;height:1.6px;background:#b07080;opacity:0.65"></div>
<div class="abs" style="left:700px;top:100.40px;width:1px;height:1.6px;background:#9a9a9a;opacity:0.65"></div>
<div class="abs" style="left:701px;top:100.40px;width:1px;height:1.6px;background:#b07080;opacity:0.65"></div>
<div class="abs" style="left:702px;top:100.40px;width:1px;height:1.6px;background:#9a9a9a;opacity:0.65"></div>
<div class="abs" style="left:703px;top:100.40px;width:5px;height:1.6px;background:#707070;opacity:0.65"></div>
<div class="abs" style="left:709px;top:100.40px;width:3px;height:1.6px;background:#707070;opacity:0.65"></div>
<div class="abs" style="left:712px;top:100.40px;width:2px;height:1.6px;background:#9a9a9a;opacity:0.65"></div>
<div class="abs" style="left:714px;top:100.40px;width:1px;height:1.6px;background:#b07080;opacity:0.65"></div>
<div class="abs" style="left:715px;top:100.40px;width:1px;height:1.6px;background:#9a9a9a;opacity:0.65"></div>
<div class="abs" style="left:716px;top:100.40px;width:1px;height:1.6px;background:#9a9a9a;opacity:0.65"></div>
<div class="abs" style="left:717px;top:100.40px;width:4px;height:1.6px;background:#b07080;opacity:0.65"></div>
<div class="abs" style="left:721px;top:100.40px;width:1px;height:1.6px;background:#9a9a9a;opacity:0.65"></div>
<div class="abs" style="left:722px;top:100.40px;width:2px;height:1.6px;background:#9a9a9a;opacity:0.65"></div>
<div class="abs" style="left:724px;top:100.40px;width:3px;height:1.6px;background:#b07080;opacity:0.65"></div>
<div class="abs" style="left:700px;top:102.20px;width:1px;height:1.6px;background:#9a9a9a;opacity:0.65"></div>
<div class="abs" style="left:701px;top:102.20px;width:1px;height:1.6px;background:#b07080;opacity:0.65"></div>
<div class="abs" style="left:702px;top:102.20px;width:1px;height:1.6px;background:#9a9a9a;opacity:0.65"></div>
<div class="abs" style="left:703px;top:102.20px;width:5px;height:1.6px;background:#707070;opacity:0.65"></div>
<div class="abs" style="left:709px;top:102.20px;width:4px;height:1.6px;background:#707070;opacity:0.65"></div>
<div class="abs" style="left:713px;top:102.20px;width:2px;height:1.6px;background:#9a9a9a;opacity:0.65"></div>
<div class="abs" style="left:715px;top:102.20px;width:1px;height:1.6px;background:#b07080;opacity:0.65"></div>
<div class="abs" style="left:716px;top:102.20px;width:1px;height:1.6px;background:#9a9a9a;opacity:0.65"></div>
<div class="abs" style="left:717px;top:102.20px;width:1px;height:1.6px;background:#9a9a9a;opacity:0.65"></div>
<div class="abs" style="left:718px;top:102.20px;width:4px;height:1.6px;background:#b07080;opacity:0.65"></div>
<div class="abs" style="left:722px;top:102.20px;width:1px;height:1.6px;background:#9a9a9a;opacity:0.65"></div>
<div class="abs" style="left:723px;top:102.20px;width:2px;height:1.6px;background:#9a9a9a;opacity:0.65"></div>
<div class="abs" style="left:725px;top:102.20px;width:2px;height:1.6px;background:#b07080;opacity:0.65"></div>
<div class="abs" style="left:700px;top:104.00px;width:1px;height:1.6px;background:#9a9a9a;opacity:0.65"></div>
<div class="abs" style="left:701px;top:104.00px;width:1px;height:1.6px;background:#b07080;opacity:0.65"></div>
<div class="abs" style="left:702px;top:104.00px;width:1px;height:1.6px;background:#9a9a9a;opacity:0.65"></div>
<div class="abs" style="left:703px;top:104.00px;width:5px;height:1.6px;background:#707070;opacity:0.65"></div>
<div class="abs" style="left:709px;top:104.00px;width:3px;height:1.6px;background:#707070;opacity:0.65"></div>
<div class="abs" style="left:712px;top:104.00px;width:2px;height:1.6px;background:#9a9a9a;opacity:0.65"></div>
<div class="abs" style="left:714px;top:104.00px;width:1px;height:1.6px;background:#b07080;opacity:0.65"></div>
<div class="abs" style="left:715px;top:104.00px;width:1px;height:1.6px;background:#9a9a9a;opacity:0.65"></div>
<div class="abs" style="left:716px;top:104.00px;width:1px;height:1.6px;background:#9a9a9a;opacity:0.65"></div>
<div class="abs" style="left:717px;top:104.00px;width:4px;height:1.6px;background:#b07080;opacity:0.65"></div>
<div class="abs" style="left:721px;top:104.00px;width:1px;height:1.6px;background:#9a9a9a;opacity:0.65"></div>
<div class="abs" style="left:722px;top:104.00px;width:2px;height:1.6px;background:#9a9a9a;opacity:0.65"></div>
<div class="abs" style="left:724px;top:104.00px;width:3px;height:1.6px;background:#b07080;opacity:0.65"></div>
<div class="abs" style="left:696px;top:105.80px;width:2px;height:1.6px;background:#9a9a9a;opacity:0.65"></div>
<div class="abs" style="left:698px;top:105.80px;width:3px;height:1.6px;background:#b07080;opacity:0.65"></div>
<div class="abs" style="left:701px;top:105.80px;width:1px;height:1.6px;background:#9a9a9a;opacity:0.65"></div>
<div class="abs" style="left:696px;top:107.60px;width:1px;height:1.6px;background:#9a9a9a;opacity:0.65"></div>
<div class="abs" style="left:697px;top:107.60px;width:6px;height:1.6px;background:#b07080;opacity:0.65"></div>
<div class="abs" style="left:703px;top:107.60px;width:1px;height:1.6px;background:#9a9a9a;opacity:0.65"></div>
<div class="abs" style="left:700px;top:109.40px;width:3px;height:1.6px;background:#7a70c0;opacity:0.65"></div>
<div class="abs" style="left:704px;top:109.40px;width:1px;height:1.6px;background:#707070;opacity:0.65"></div>
<div class="abs" style="left:706px;top:109.40px;width:1px;height:1.6px;background:#9a9a9a;opacity:0.65"></div>
<div class="abs" style="left:708px;top:109.40px;width:4px;height:1.6px;background:#7a70c0;opacity:0.65"></div>
<div class="abs" style="left:712px;top:109.40px;width:1px;height:1.6px;background:#707070;opacity:0.65"></div>
<div class="abs" style="left:700px;top:111.20px;width:3px;height:1.6px;background:#7a70c0;opacity:0.65"></div>
<div class="abs" style="left:704px;top:111.20px;width:3px;height:1.6px;background:#707070;opacity:0.65"></div>
<div class="abs" style="left:708px;top:111.20px;width:1px;height:1.6px;background:#9a9a9a;opacity:0.65"></div>
<div class="abs" style="left:710px;top:111.20px;width:2px;height:1.6px;background:#60b0a0;opacity:0.65"></div>
<div class="abs" style="left:712px;top:111.20px;width:1px;height:1.6px;background:#707070;opacity:0.65"></div>
<div class="abs" style="left:700px;top:114.80px;width:2px;height:1.6px;background:#7a70c0;opacity:0.65"></div>
<div class="abs" style="left:702px;top:114.80px;width:1px;height:1.6px;background:#8a80c8;opacity:0.65"></div>
<div class="abs" style="left:703px;top:114.80px;width:1px;height:1.6px;background:#707070;opacity:0.65"></div>
<div class="abs" style="left:704px;top:114.80px;width:1px;height:1.6px;background:#8a80c8;opacity:0.65"></div>
<div class="abs" style="left:705px;top:114.80px;width:1px;height:1.6px;background:#8a80c8;opacity:0.65"></div>
<div class="abs" style="left:704px;top:116.60px;width:11px;height:1.6px;background:#707070;opacity:0.65"></div>
<div class="abs" style="left:715px;top:116.60px;width:1px;height:1.6px;background:#8a80c8;opacity:0.65"></div>
<div class="abs" style="left:716px;top:116.60px;width:3px;height:1.6px;background:#707070;opacity:0.65"></div>
<div class="abs" style="left:719px;top:116.60px;width:1px;height:1.6px;background:#8a80c8;opacity:0.65"></div>
<div class="abs" style="left:700px;top:118.40px;width:1px;height:1.6px;background:#8a80c8;opacity:0.65"></div>
<div class="abs" style="left:696px;top:120.20px;width:2px;height:1.6px;background:#9a9a9a;opacity:0.65"></div>
<div class="abs" style="left:698px;top:120.20px;width:6px;height:1.6px;background:#b07080;opacity:0.65"></div>
<div class="abs" style="left:704px;top:120.20px;width:1px;height:1.6px;background:#9a9a9a;opacity:0.65"></div>
<div class="abs" style="left:692px;top:122.00px;width:2px;height:1.6px;background:#9a9a9a;opacity:0.65"></div>
<div class="abs" style="left:694px;top:122.00px;width:4px;height:1.6px;background:#b07080;opacity:0.65"></div>
<div class="abs" style="left:698px;top:122.00px;width:1px;height:1.6px;background:#9a9a9a;opacity:0.65"></div>
<div class="abs" style="left:692px;top:123.80px;width:2px;height:1.6px;background:#9a9a9a;opacity:0.65"></div>
<div class="abs" style="left:694px;top:123.80px;width:4px;height:1.6px;background:#b07080;opacity:0.65"></div>
<div class="abs" style="left:698px;top:123.80px;width:1px;height:1.6px;background:#9a9a9a;opacity:0.65"></div>
<div class="abs" style="left:727px;top:76px;width:1px;height:545px;background:#ececec"></div>
<div class="abs" style="left:727px;top:77px;width:12px;height:282px;background:#c4c4c4"></div>
<div class="abs" style="left:727px;top:85.5px;width:12px;height:2px;background:#333"></div>
<div class="abs" style="left:739px;top:27px;width:1px;height:594px;background:#e7e7e7"></div>
<div class="abs" style="left:347px;top:610px;width:176px;height:11px;background:#c4c4c4"></div>
<div class="abs" style="left:1145px;top:76px;width:1px;height:545px;background:#ececec"></div>
<div class="abs" style="left:1153px;top:77.00px;width:1px;height:1.6px;background:#9a9a9a;opacity:0.65"></div>
<div class="abs" style="left:1154px;top:77.00px;width:8px;height:1.6px;background:#b07080;opacity:0.65"></div>
<div class="abs" style="left:1163px;top:77.00px;width:4px;height:1.6px;background:#d07080;opacity:0.65"></div>
<div class="abs" style="left:1167px;top:77.00px;width:1px;height:1.6px;background:#9a9a9a;opacity:0.65"></div>
<div class="abs" style="left:1153px;top:78.80px;width:1px;height:1.6px;background:#9a9a9a;opacity:0.65"></div>
<div class="abs" style="left:1154px;top:78.80px;width:4px;height:1.6px;background:#b07080;opacity:0.65"></div>
<div class="abs" style="left:1159px;top:78.80px;width:4px;height:1.6px;background:#d07080;opacity:0.65"></div>
<div class="abs" style="left:1163px;top:78.80px;width:1px;height:1.6px;background:#9a9a9a;opacity:0.65"></div>
<div class="abs" style="left:1164px;top:78.80px;width:7px;height:1.6px;background:#7a7ad0;opacity:0.65"></div>
<div class="abs" style="left:1171px;top:78.80px;width:1px;height:1.6px;background:#9a9a9a;opacity:0.65"></div>
<div class="abs" style="left:1153px;top:80.60px;width:1px;height:1.6px;background:#9a9a9a;opacity:0.65"></div>
<div class="abs" style="left:1154px;top:80.60px;width:4px;height:1.6px;background:#b07080;opacity:0.65"></div>
<div class="abs" style="left:1158px;top:80.60px;width:1px;height:1.6px;background:#9a9a9a;opacity:0.65"></div>
<div class="abs" style="left:1157px;top:82.40px;width:1px;height:1.6px;background:#9a9a9a;opacity:0.65"></div>
<div class="abs" style="left:1158px;top:82.40px;width:4px;height:1.6px;background:#b07080;opacity:0.65"></div>
<div class="abs" style="left:1163px;top:82.40px;width:7px;height:1.6px;background:#d07080;opacity:0.65"></div>
<div class="abs" style="left:1170px;top:82.40px;width:1px;height:1.6px;background:#9a9a9a;opacity:0.65"></div>
<div class="abs" style="left:1171px;top:82.40px;width:7px;height:1.6px;background:#7a7ad0;opacity:0.65"></div>
<div class="abs" style="left:1178px;top:82.40px;width:1px;height:1.6px;background:#9a9a9a;opacity:0.65"></div>
<div class="abs" style="left:1157px;top:84.20px;width:1px;height:1.6px;background:#9a9a9a;opacity:0.65"></div>
<div class="abs" style="left:1158px;top:84.20px;width:4px;height:1.6px;background:#b07080;opacity:0.65"></div>
<div class="abs" style="left:1163px;top:84.20px;width:10px;height:1.6px;background:#d07080;opacity:0.65"></div>
<div class="abs" style="left:1173px;top:84.20px;width:1px;height:1.6px;background:#9a9a9a;opacity:0.65"></div>
<div class="abs" style="left:1174px;top:84.20px;width:14px;height:1.6px;background:#7a7ad0;opacity:0.65"></div>
<div class="abs" style="left:1157px;top:86.00px;width:1px;height:1.6px;background:#9a9a9a;opacity:0.65"></div>
<div class="abs" style="left:1158px;top:86.00px;width:4px;height:1.6px;background:#b07080;opacity:0.65"></div>
<div class="abs" style="left:1163px;top:86.00px;width:4px;height:1.6px;background:#d07080;opacity:0.65"></div>
<div class="abs" style="left:1167px;top:86.00px;width:1px;height:1.6px;background:#9a9a9a;opacity:0.65"></div>
<div class="abs" style="left:1168px;top:86.00px;width:10px;height:1.6px;background:#7a7ad0;opacity:0.65"></div>
<div class="abs" style="left:1179px;top:86.00px;width:7px;height:1.6px;background:#d07080;opacity:0.65"></div>
<div class="abs" style="left:1186px;top:86.00px;width:1px;height:1.6px;background:#9a9a9a;opacity:0.65"></div>
<div class="abs" style="left:1187px;top:86.00px;width:1px;height:1.6px;background:#7a7ad0;opacity:0.65"></div>
<div class="abs" style="left:1157px;top:87.80px;width:1px;height:1.6px;background:#9a9a9a;opacity:0.65"></div>
<div class="abs" style="left:1158px;top:87.80px;width:5px;height:1.6px;background:#b07080;opacity:0.65"></div>
<div class="abs" style="left:1163px;top:87.80px;width:1px;height:1.6px;background:#9a9a9a;opacity:0.65"></div>
<div class="abs" style="left:1164px;top:87.80px;width:8px;height:1.6px;background:#707070;opacity:0.65"></div>
<div class="abs" style="left:1172px;top:87.80px;width:2px;height:1.6px;background:#9a9a9a;opacity:0.65"></div>
<div class="abs" style="left:1174px;top:87.80px;width:5px;height:1.6px;background:#b07080;opacity:0.65"></div>
<div class="abs" style="left:1179px;top:87.80px;width:1px;height:1.6px;background:#9a9a9a;opacity:0.65"></div>
<div class="abs" style="left:1153px;top:89.60px;width:2px;height:1.6px;background:#9a9a9a;opacity:0.65"></div>
<div class="abs" style="left:1155px;top:89.60px;width:4px;height:1.6px;background:#b07080;opacity:0.65"></div>
<div class="abs" style="left:1159px;top:89.60px;width:1px;height:1.6px;background:#9a9a9a;opacity:0.65"></div>
<div class="abs" style="left:1153px;top:91.40px;width:1px;height:1.6px;background:#9a9a9a;opacity:0.65"></div>
<div class="abs" style="left:1154px;top:91.40px;width:4px;height:1.6px;background:#b07080;opacity:0.65"></div>
<div class="abs" style="left:1158px;top:91.40px;width:1px;height:1.6px;background:#9a9a9a;opacity:0.65"></div>
<div class="abs" style="left:1157px;top:93.20px;width:1px;height:1.6px;background:#9a9a9a;opacity:0.65"></div>
<div class="abs" style="left:1158px;top:93.20px;width:3px;height:1.6px;background:#b07080;opacity:0.65"></div>
<div class="abs" style="left:1161px;top:93.20px;width:1px;height:1.6px;background:#9a9a9a;opacity:0.65"></div>
<div class="abs" style="left:1161px;top:95.00px;width:1px;height:1.6px;background:#9a9a9a;opacity:0.65"></div>
<div class="abs" style="left:1162px;top:95.00px;width:1px;height:1.6px;background:#b07080;opacity:0.65"></div>
<div class="abs" style="left:1163px;top:95.00px;width:1px;height:1.6px;background:#9a9a9a;opacity:0.65"></div>
<div class="abs" style="left:1164px;top:95.00px;width:5px;height:1.6px;background:#707070;opacity:0.65"></div>
<div class="abs" style="left:1170px;top:95.00px;width:3px;height:1.6px;background:#707070;opacity:0.65"></div>
<div class="abs" style="left:1173px;top:95.00px;width:2px;height:1.6px;background:#9a9a9a;opacity:0.65"></div>
<div class="abs" style="left:1175px;top:95.00px;width:1px;height:1.6px;background:#b07080;opacity:0.65"></div>
<div class="abs" style="left:1176px;top:95.00px;width:1px;height:1.6px;background:#9a9a9a;opacity:0.65"></div>
<div class="abs" style="left:1177px;top:95.00px;width:1px;height:1.6px;background:#9a9a9a;opacity:0.65"></div>
<div class="abs" style="left:1178px;top:95.00px;width:4px;height:1.6px;background:#b07080;opacity:0.65"></div>
<div class="abs" style="left:1182px;top:95.00px;width:1px;height:1.6px;background:#9a9a9a;opacity:0.65"></div>
<div class="abs" style="left:1183px;top:95.00px;width:2px;height:1.6px;background:#9a9a9a;opacity:0.65"></div>
<div class="abs" style="left:1185px;top:95.00px;width:3px;height:1.6px;background:#b07080;opacity:0.65"></div>
<div class="abs" style="left:1161px;top:96.80px;width:1px;height:1.6px;background:#9a9a9a;opacity:0.65"></div>
<div class="abs" style="left:1162px;top:96.80px;width:1px;height:1.6px;background:#b07080;opacity:0.65"></div>
<div class="abs" style="left:1163px;top:96.80px;width:1px;height:1.6px;background:#9a9a9a;opacity:0.65"></div>
<div class="abs" style="left:1164px;top:96.80px;width:5px;height:1.6px;background:#707070;opacity:0.65"></div>
<div class="abs" style="left:1170px;top:96.80px;width:5px;height:1.6px;background:#707070;opacity:0.65"></div>
<div class="abs" style="left:1175px;top:96.80px;width:2px;height:1.6px;background:#9a9a9a;opacity:0.65"></div>
<div class="abs" style="left:1177px;top:96.80px;width:1px;height:1.6px;background:#b07080;opacity:0.65"></div>
<div class="abs" style="left:1178px;top:96.80px;width:1px;height:1.6px;background:#9a9a9a;opacity:0.65"></div>
<div class="abs" style="left:1179px;top:96.80px;width:1px;height:1.6px;background:#9a9a9a;opacity:0.65"></div>
<div class="abs" style="left:1180px;top:96.80px;width:4px;height:1.6px;background:#b07080;opacity:0.65"></div>
<div class="abs" style="left:1184px;top:96.80px;width:1px;height:1.6px;background:#9a9a9a;opacity:0.65"></div>
<div class="abs" style="left:1185px;top:96.80px;width:2px;height:1.6px;background:#9a9a9a;opacity:0.65"></div>
<div class="abs" style="left:1187px;top:96.80px;width:1px;height:1.6px;background:#b07080;opacity:0.65"></div>
<div class="abs" style="left:1161px;top:98.60px;width:1px;height:1.6px;background:#9a9a9a;opacity:0.65"></div>
<div class="abs" style="left:1162px;top:98.60px;width:1px;height:1.6px;background:#b07080;opacity:0.65"></div>
<div class="abs" style="left:1163px;top:98.60px;width:1px;height:1.6px;background:#9a9a9a;opacity:0.65"></div>
<div class="abs" style="left:1164px;top:98.60px;width:5px;height:1.6px;background:#707070;opacity:0.65"></div>
<div class="abs" style="left:1170px;top:98.60px;width:3px;height:1.6px;background:#707070;opacity:0.65"></div>
<div class="abs" style="left:1173px;top:98.60px;width:2px;height:1.6px;background:#9a9a9a;opacity:0.65"></div>
<div class="abs" style="left:1175px;top:98.60px;width:1px;height:1.6px;background:#b07080;opacity:0.65"></div>
<div class="abs" style="left:1176px;top:98.60px;width:1px;height:1.6px;background:#9a9a9a;opacity:0.65"></div>
<div class="abs" style="left:1177px;top:98.60px;width:1px;height:1.6px;background:#9a9a9a;opacity:0.65"></div>
<div class="abs" style="left:1178px;top:98.60px;width:4px;height:1.6px;background:#b07080;opacity:0.65"></div>
<div class="abs" style="left:1182px;top:98.60px;width:1px;height:1.6px;background:#9a9a9a;opacity:0.65"></div>
<div class="abs" style="left:1183px;top:98.60px;width:2px;height:1.6px;background:#9a9a9a;opacity:0.65"></div>
<div class="abs" style="left:1185px;top:98.60px;width:3px;height:1.6px;background:#b07080;opacity:0.65"></div>
<div class="abs" style="left:1161px;top:100.40px;width:1px;height:1.6px;background:#9a9a9a;opacity:0.65"></div>
<div class="abs" style="left:1162px;top:100.40px;width:1px;height:1.6px;background:#b07080;opacity:0.65"></div>
<div class="abs" style="left:1163px;top:100.40px;width:1px;height:1.6px;background:#9a9a9a;opacity:0.65"></div>
<div class="abs" style="left:1164px;top:100.40px;width:5px;height:1.6px;background:#707070;opacity:0.65"></div>
<div class="abs" style="left:1170px;top:100.40px;width:3px;height:1.6px;background:#707070;opacity:0.65"></div>
<div class="abs" style="left:1173px;top:100.40px;width:2px;height:1.6px;background:#9a9a9a;opacity:0.65"></div>
<div class="abs" style="left:1175px;top:100.40px;width:1px;height:1.6px;background:#b07080;opacity:0.65"></div>
<div class="abs" style="left:1176px;top:100.40px;width:1px;height:1.6px;background:#9a9a9a;opacity:0.65"></div>
<div class="abs" style="left:1177px;top:100.40px;width:1px;height:1.6px;background:#9a9a9a;opacity:0.65"></div>
<div class="abs" style="left:1178px;top:100.40px;width:4px;height:1.6px;background:#b07080;opacity:0.65"></div>
<div class="abs" style="left:1182px;top:100.40px;width:1px;height:1.6px;background:#9a9a9a;opacity:0.65"></div>
<div class="abs" style="left:1183px;top:100.40px;width:2px;height:1.6px;background:#9a9a9a;opacity:0.65"></div>
<div class="abs" style="left:1185px;top:100.40px;width:3px;height:1.6px;background:#b07080;opacity:0.65"></div>
<div class="abs" style="left:1161px;top:102.20px;width:1px;height:1.6px;background:#9a9a9a;opacity:0.65"></div>
<div class="abs" style="left:1162px;top:102.20px;width:1px;height:1.6px;background:#b07080;opacity:0.65"></div>
<div class="abs" style="left:1163px;top:102.20px;width:1px;height:1.6px;background:#9a9a9a;opacity:0.65"></div>
<div class="abs" style="left:1164px;top:102.20px;width:5px;height:1.6px;background:#707070;opacity:0.65"></div>
<div class="abs" style="left:1170px;top:102.20px;width:4px;height:1.6px;background:#707070;opacity:0.65"></div>
<div class="abs" style="left:1174px;top:102.20px;width:2px;height:1.6px;background:#9a9a9a;opacity:0.65"></div>
<div class="abs" style="left:1176px;top:102.20px;width:1px;height:1.6px;background:#b07080;opacity:0.65"></div>
<div class="abs" style="left:1177px;top:102.20px;width:1px;height:1.6px;background:#9a9a9a;opacity:0.65"></div>
<div class="abs" style="left:1178px;top:102.20px;width:1px;height:1.6px;background:#9a9a9a;opacity:0.65"></div>
<div class="abs" style="left:1179px;top:102.20px;width:4px;height:1.6px;background:#b07080;opacity:0.65"></div>
<div class="abs" style="left:1183px;top:102.20px;width:1px;height:1.6px;background:#9a9a9a;opacity:0.65"></div>
<div class="abs" style="left:1184px;top:102.20px;width:2px;height:1.6px;background:#9a9a9a;opacity:0.65"></div>
<div class="abs" style="left:1186px;top:102.20px;width:2px;height:1.6px;background:#b07080;opacity:0.65"></div>
<div class="abs" style="left:1161px;top:104.00px;width:1px;height:1.6px;background:#9a9a9a;opacity:0.65"></div>
<div class="abs" style="left:1162px;top:104.00px;width:1px;height:1.6px;background:#b07080;opacity:0.65"></div>
<div class="abs" style="left:1163px;top:104.00px;width:1px;height:1.6px;background:#9a9a9a;opacity:0.65"></div>
<div class="abs" style="left:1164px;top:104.00px;width:5px;height:1.6px;background:#707070;opacity:0.65"></div>
<div class="abs" style="left:1170px;top:104.00px;width:3px;height:1.6px;background:#707070;opacity:0.65"></div>
<div class="abs" style="left:1173px;top:104.00px;width:2px;height:1.6px;background:#9a9a9a;opacity:0.65"></div>
<div class="abs" style="left:1175px;top:104.00px;width:1px;height:1.6px;background:#b07080;opacity:0.65"></div>
<div class="abs" style="left:1176px;top:104.00px;width:1px;height:1.6px;background:#9a9a9a;opacity:0.65"></div>
<div class="abs" style="left:1177px;top:104.00px;width:1px;height:1.6px;background:#9a9a9a;opacity:0.65"></div>
<div class="abs" style="left:1178px;top:104.00px;width:4px;height:1.6px;background:#b07080;opacity:0.65"></div>
<div class="abs" style="left:1182px;top:104.00px;width:1px;height:1.6px;background:#9a9a9a;opacity:0.65"></div>
<div class="abs" style="left:1183px;top:104.00px;width:2px;height:1.6px;background:#9a9a9a;opacity:0.65"></div>
<div class="abs" style="left:1185px;top:104.00px;width:3px;height:1.6px;background:#b07080;opacity:0.65"></div>
<div class="abs" style="left:1157px;top:105.80px;width:2px;height:1.6px;background:#9a9a9a;opacity:0.65"></div>
<div class="abs" style="left:1159px;top:105.80px;width:3px;height:1.6px;background:#b07080;opacity:0.65"></div>
<div class="abs" style="left:1162px;top:105.80px;width:1px;height:1.6px;background:#9a9a9a;opacity:0.65"></div>
<div class="abs" style="left:1157px;top:107.60px;width:1px;height:1.6px;background:#9a9a9a;opacity:0.65"></div>
<div class="abs" style="left:1158px;top:107.60px;width:6px;height:1.6px;background:#b07080;opacity:0.65"></div>
<div class="abs" style="left:1164px;top:107.60px;width:1px;height:1.6px;background:#9a9a9a;opacity:0.65"></div>
<div class="abs" style="left:1161px;top:109.40px;width:3px;height:1.6px;background:#7a70c0;opacity:0.65"></div>
<div class="abs" style="left:1165px;top:109.40px;width:1px;height:1.6px;background:#707070;opacity:0.65"></div>
<div class="abs" style="left:1167px;top:109.40px;width:1px;height:1.6px;background:#9a9a9a;opacity:0.65"></div>
<div class="abs" style="left:1169px;top:109.40px;width:4px;height:1.6px;background:#7a70c0;opacity:0.65"></div>
<div class="abs" style="left:1173px;top:109.40px;width:1px;height:1.6px;background:#707070;opacity:0.65"></div>
<div class="abs" style="left:1161px;top:111.20px;width:3px;height:1.6px;background:#7a70c0;opacity:0.65"></div>
<div class="abs" style="left:1165px;top:111.20px;width:3px;height:1.6px;background:#707070;opacity:0.65"></div>
<div class="abs" style="left:1169px;top:111.20px;width:1px;height:1.6px;background:#9a9a9a;opacity:0.65"></div>
<div class="abs" style="left:1171px;top:111.20px;width:2px;height:1.6px;background:#60b0a0;opacity:0.65"></div>
<div class="abs" style="left:1173px;top:111.20px;width:1px;height:1.6px;background:#707070;opacity:0.65"></div>
<div class="abs" style="left:1161px;top:114.80px;width:2px;height:1.6px;background:#7a70c0;opacity:0.65"></div>
<div class="abs" style="left:1163px;top:114.80px;width:1px;height:1.6px;background:#8a80c8;opacity:0.65"></div>
<div class="abs" style="left:1164px;top:114.80px;width:1px;height:1.6px;background:#707070;opacity:0.65"></div>
<div class="abs" style="left:1165px;top:114.80px;width:1px;height:1.6px;background:#8a80c8;opacity:0.65"></div>
<div class="abs" style="left:1166px;top:114.80px;width:1px;height:1.6px;background:#8a80c8;opacity:0.65"></div>
<div class="abs" style="left:1165px;top:116.60px;width:11px;height:1.6px;background:#707070;opacity:0.65"></div>
<div class="abs" style="left:1176px;top:116.60px;width:1px;height:1.6px;background:#8a80c8;opacity:0.65"></div>
<div class="abs" style="left:1177px;top:116.60px;width:3px;height:1.6px;background:#707070;opacity:0.65"></div>
<div class="abs" style="left:1180px;top:116.60px;width:1px;height:1.6px;background:#8a80c8;opacity:0.65"></div>
<div class="abs" style="left:1161px;top:118.40px;width:1px;height:1.6px;background:#8a80c8;opacity:0.65"></div>
<div class="abs" style="left:1157px;top:120.20px;width:2px;height:1.6px;background:#9a9a9a;opacity:0.65"></div>
<div class="abs" style="left:1159px;top:120.20px;width:6px;height:1.6px;background:#b07080;opacity:0.65"></div>
<div class="abs" style="left:1165px;top:120.20px;width:1px;height:1.6px;background:#9a9a9a;opacity:0.65"></div>
<div class="abs" style="left:1153px;top:122.00px;width:2px;height:1.6px;background:#9a9a9a;opacity:0.65"></div>
<div class="abs" style="left:1155px;top:122.00px;width:4px;height:1.6px;background:#b07080;opacity:0.65"></div>
<div class="abs" style="left:1159px;top:122.00px;width:1px;height:1.6px;background:#9a9a9a;opacity:0.65"></div>
<div class="abs" style="left:1153px;top:123.80px;width:2px;height:1.6px;background:#9a9a9a;opacity:0.65"></div>
<div class="abs" style="left:1155px;top:123.80px;width:4px;height:1.6px;background:#b07080;opacity:0.65"></div>
<div class="abs" style="left:1159px;top:123.80px;width:1px;height:1.6px;background:#9a9a9a;opacity:0.65"></div>
<div class="abs" style="left:1188px;top:76px;width:1px;height:545px;background:#ececec"></div>
<div class="abs" style="left:1189px;top:86px;width:11px;height:2px;background:#333"></div>
<div id="status"></div>
<div class="abs" style="left:0;top:621px;width:30px;height:19px;background:#16825d"></div>
<div id="task"></div>
<div class="abs" style="left:216px;top:640px;width:42px;height:7px;background:#333"></div>
<div class="abs" style="left:1090px;top:640px;width:110px;height:7px;overflow:hidden"><div class="abs" style="left:10px;top:3px;font-size:11px;line-height:12px;color:#fff;font-weight:bold">16:40:24</div><div class="abs" style="left:106px;top:0;width:1px;height:7px;background:#888"></div></div>
<div class="sb" style="left:834px;width:55px"><span style="display:inline-block;transform-origin:0 0">行 2，列 20</span></div>
<div class="sb" style="left:903px;width:32px"><span style="display:inline-block;transform-origin:0 0">空格: 4</span></div>
<div class="sb" style="left:949px;width:28px"><span style="display:inline-block;transform-origin:0 0">UTF-8</span></div>
<div class="sb" style="left:991px;width:21px"><span style="display:inline-block;transform-origin:0 0">CRLF</span></div>
<div class="sb" style="left:1044px;width:26px"><span style="display:inline-block;transform-origin:0 0">HTML</span></div>
<div class="sb" style="left:1100px;width:34px"><span style="display:inline-block;transform-origin:0 0">Go Live</span></div>
<div class="sb" style="left:52px">0</div>
<div class="sb" style="left:76px">0</div>
<svg class="abs" style="left:0;top:621px" width="1200" height="19" viewBox="0 0 1200 19">
<g fill="none" stroke="#fff" stroke-width="1.2">
<path d="M10 7 L13 10 L10 13 M20 5 L17 8 L20 11"/>
<circle cx="44" cy="9.5" r="5.5"/><path d="M42 7.5 L46 11.5 M46 7.5 L42 11.5"/>
<path d="M68 4.5 L74 14.5 H62 Z"/><path d="M68 8 V11 M68 12.5 V13.2"/>
<path d="M1030 4 Q1027 4 1027 7 V8.5 Q1027 9.5 1026 9.5 Q1027 9.5 1027 10.5 V12 Q1027 15 1030 15"/><path d="M1035 4 L1036 9"/><circle cx="1035.5" cy="12.5" r="2"/>
<path d="M1087 11.5 A4.5 4.5 0 1 1 1094 11.5"/><circle cx="1090.5" cy="8" r="1.6" fill="#fff"/><path d="M1090.5 10 V15.5"/>
<path d="M1150 15.5 L1153 11 M1156 15.5 L1153 11"/><circle cx="1153" cy="8" r="2.5"/><path d="M1155 4 H1161 V9 H1158 L1156.5 10.5"/>
<path d="M1177 13.5 H1186 M1178 13.5 V9 Q1178 4.5 1181.5 4.5 Q1185 4.5 1185 9 V13.5 M1180 15.5 H1183"/>
</g>
</svg>
<svg class="abs" style="left:915px;top:545px" width="40" height="76" viewBox="0 0 40 76"><g fill="none" stroke="#dedede" stroke-width="1"><path d="M30 6 H7.5 V41 H18"/><path d="M13 13 H20 M13 19 V25"/><path d="M30 6 Q36 8 37 12"/><path d="M10 60 V76 M14 56 V76 M18 62 V76"/></g></svg>
<svg class="abs" style="left:940px;top:600px" width="140" height="30" viewBox="0 0 140 30"><path d="M6 0 H128 V21 Q122 24 112 25 Q100 26 90 27 Q75 28 60 26 Q45 25 30 27 Q20 27 14 24 Q9 22 6 21 Z" fill="#fff"/></svg>
<div class="menu" style="left:180px;top:23px;width:211px;height:463px"></div>
<div class="mi" style="left:203px;top:34.0px;">命令面板...</div>
<div class="mi" style="right:832px;top:34.0px;">Ctrl+Shift+P</div>
<div class="mi" style="left:203px;top:57.0px;">打开视图...</div>
<div class="mi" style="left:203px;top:145.0px;">资源管理器</div>
<div class="mi" style="right:832px;top:145.0px;">Ctrl+Shift+E</div>
<div class="mi" style="left:203px;top:168.0px;">搜索</div>
<div class="mi" style="right:832px;top:168.0px;">Ctrl+Shift+F</div>
<div class="mi" style="left:203px;top:190.5px;">SCM</div>
<div class="mi" style="right:832px;top:190.5px;">Ctrl+Shift+G</div>
<div class="mi" style="left:203px;top:213.0px;">运行</div>
<div class="mi" style="right:832px;top:213.0px;">Ctrl+Shift+D</div>
<div class="mi" style="left:203px;top:236.5px;">扩展</div>
<div class="mi" style="right:832px;top:236.5px;">Ctrl+Shift+X</div>
<div class="mi" style="left:203px;top:268.6px;">问题</div>
<div class="mi" style="right:832px;top:268.6px;">Ctrl+Shift+M</div>
<div class="mi" style="left:203px;top:291.6px;">输出</div>
<div class="mi" style="right:832px;top:291.6px;">Ctrl+Shift+U</div>
<div class="mi" style="left:203px;top:314.6px;">调试控制台</div>
<div class="mi" style="right:832px;top:314.6px;">Ctrl+Shift+Y</div>
<div class="mi" style="left:203px;top:337.0px;">终端</div>
<div class="mi" style="right:832px;top:337.0px;">Ctrl+`</div>
<div class="mi" style="left:203px;top:370.0px;">自动换行(&amp;W)</div>
<div class="mi" style="right:832px;top:370.0px;">Alt+Z</div>
<div class="mi" style="left:203px;top:392.6px;">Minimap</div>
<div class="mi" style="left:203px;top:415.7px;">Breadcrumbs</div>
<div class="mi" style="left:203px;top:438.4px;">呈现空格</div>
<div class="mi" style="left:203px;top:460.7px;">呈现控制字符</div>
<svg class="abs" style="left:187px;top:394.6px" width="12" height="12" viewBox="0 0 12 12"><path d="M1.5 6.5 L4.5 9.5 L10.5 2.5" fill="none" stroke="#8a8a8a" stroke-width="1"/></svg>
<svg class="abs" style="left:187px;top:417.7px" width="12" height="12" viewBox="0 0 12 12"><path d="M1.5 6.5 L4.5 9.5 L10.5 2.5" fill="none" stroke="#8a8a8a" stroke-width="1"/></svg>
<svg class="abs" style="left:187px;top:440.4px" width="12" height="12" viewBox="0 0 12 12"><path d="M1.5 6.5 L4.5 9.5 L10.5 2.5" fill="none" stroke="#8a8a8a" stroke-width="1"/></svg>
<svg class="abs" style="left:187px;top:462.7px" width="12" height="12" viewBox="0 0 12 12"><path d="M1.5 6.5 L4.5 9.5 L10.5 2.5" fill="none" stroke="#8a8a8a" stroke-width="1"/></svg>
<div class="sep" style="left:181px;top:80px;width:209px"></div>
<div class="sep" style="left:181px;top:136px;width:209px"></div>
<div class="sep" style="left:181px;top:260px;width:209px"></div>
<div class="sep" style="left:181px;top:361.5px;width:209px"></div>
<div class="mi" style="left:203px;top:88.0px;">外观</div>
<svg class="abs" style="left:371px;top:91px" width="10" height="10" viewBox="0 0 10 10"><path d="M3 1.5 L6.5 5 L3 8.5" fill="none" stroke="#616161" stroke-width="1.1"/></svg>
<div class="abs" style="left:180px;top:108px;width:211px;height:23px;background:#0060c0"></div>
<div class="mi" style="left:203px;top:111.5px;color:#fff;font-weight:bold;-webkit-text-stroke:0">编辑器布局</div>
<svg class="abs" style="left:371px;top:114.5px" width="10" height="10" viewBox="0 0 10 10"><path d="M3 1.5 L6.5 5 L3 8.5" fill="none" stroke="#fff" stroke-width="1.1"/></svg>
<div class="menu" style="left:391px;top:102px;width:257px;height:362.5px"></div>
<div class="mi" style="left:414px;top:112.0px;font-size:11px;color:#606060;-webkit-text-stroke:0.15px #606060">向上拆分</div>
<div class="mi" style="left:414px;top:135.0px;font-size:11px;color:#606060;-webkit-text-stroke:0.15px #606060">向下拆分</div>
<div class="mi" style="left:414px;top:157.7px;font-size:11px;color:#606060;-webkit-text-stroke:0.15px #606060">向左拆分</div>
<div class="mi" style="left:414px;top:180.8px;font-size:11px;color:#606060;-webkit-text-stroke:0.15px #606060">向右拆分</div>
<div class="mi" style="left:414px;top:213.4px;font-size:11px;color:#606060;-webkit-text-stroke:0.15px #606060">Split in Group</div>
<div class="mi" style="left:414px;top:246.0px;font-size:11px;color:#606060;-webkit-text-stroke:0.15px #606060">单列</div>
<div class="mi" style="left:414px;top:269.0px;font-size:11px;color:#606060;-webkit-text-stroke:0.15px #606060">双列</div>
<div class="mi" style="left:414px;top:291.7px;font-size:11px;color:#606060;-webkit-text-stroke:0.15px #606060">三列</div>
<div class="mi" style="left:414px;top:314.0px;font-size:11px;color:#606060;-webkit-text-stroke:0.15px #606060">双行</div>
<div class="mi" style="left:414px;top:337.0px;font-size:11px;color:#606060;-webkit-text-stroke:0.15px #606060">三行</div>
<div class="mi" style="left:414px;top:360.0px;font-size:11px;color:#606060;-webkit-text-stroke:0.15px #606060">2x2 网格</div>
<div class="mi" style="left:414px;top:383.0px;font-size:11px;color:#606060;-webkit-text-stroke:0.15px #606060">右侧双行</div>
<div class="mi" style="left:414px;top:405.5px;font-size:11px;color:#606060;-webkit-text-stroke:0.15px #606060">底部双列</div>
<div class="mi" style="left:414px;top:438.0px;font-size:11px;color:#606060;-webkit-text-stroke:0.15px #606060">翻转布局</div>
<div class="mi" style="right:576px;top:213.4px;font-size:11.5px">Ctrl+K Ctrl+Shift+\</div>
<div class="mi" style="right:576px;top:438.0px;font-size:11.5px">Shift+Alt+0</div>
<div class="sep" style="left:392px;top:204px;width:255px"></div>
<div class="sep" style="left:392px;top:237px;width:255px"></div>
<div class="sep" style="left:392px;top:430px;width:255px"></div>
<div class="red" style="left:172px;top:98px;width:127px;height:42px"></div>
<div class="red" style="left:399px;top:152px;width:69px;height:27px"></div>
<div class="red" style="left:653px;top:501px;width:290px;height:58px"></div>
</body></html>
